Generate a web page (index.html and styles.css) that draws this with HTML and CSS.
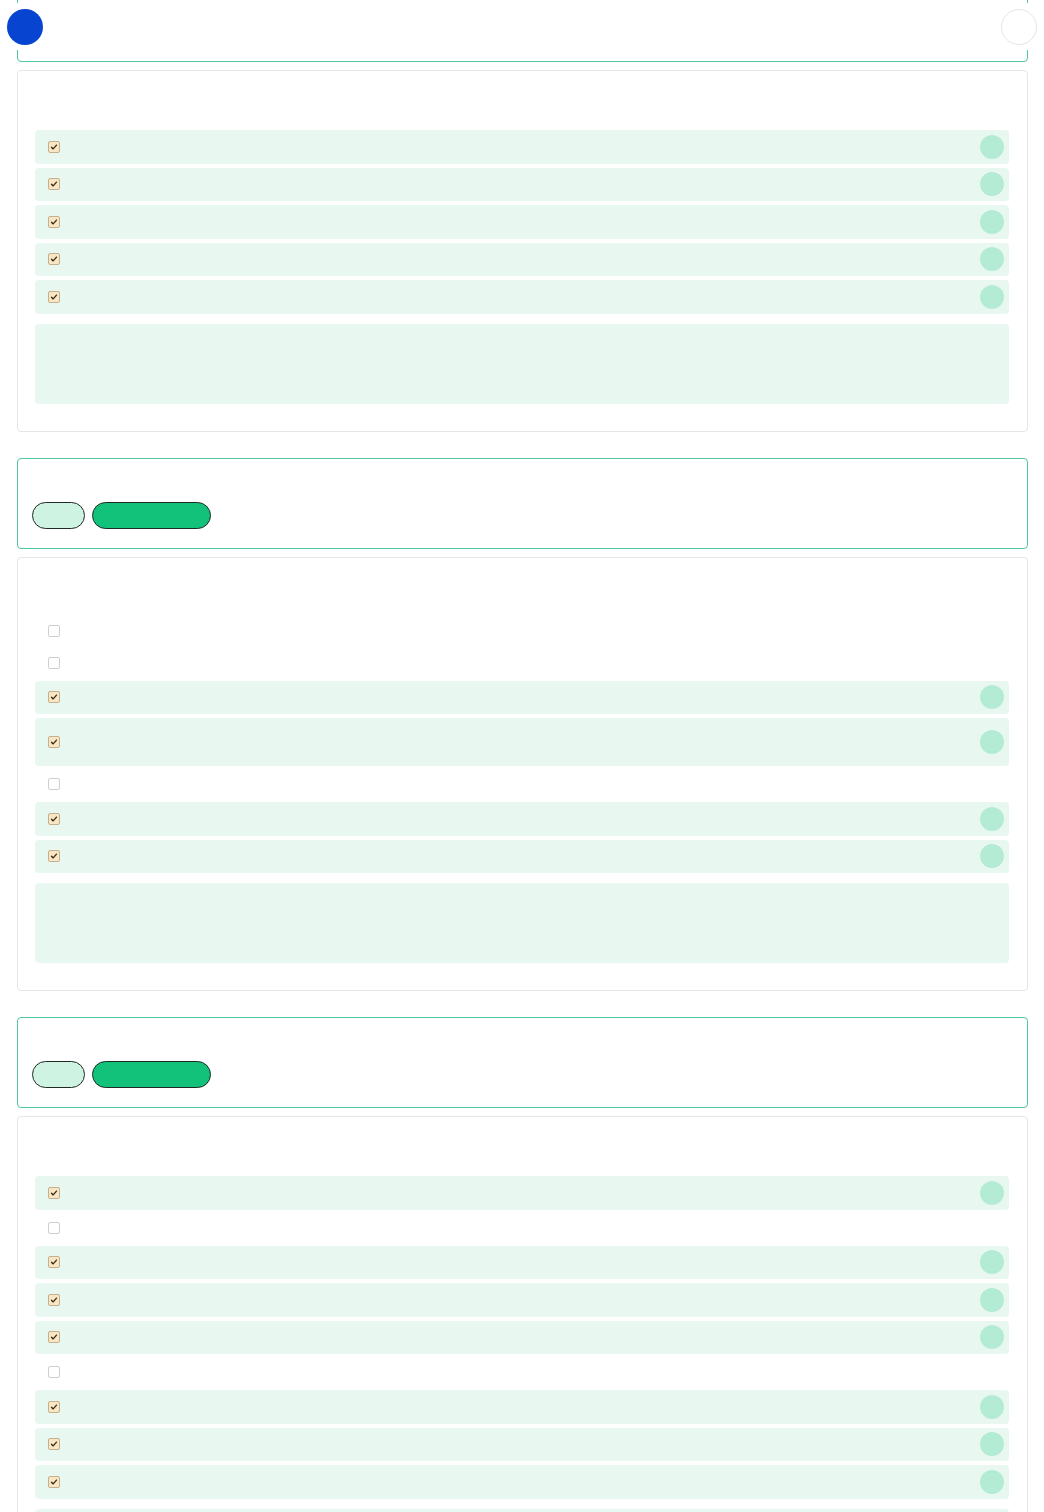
FILE: index.html
```html
<!DOCTYPE html>
<html lang="en">
<head>
  <meta charset="UTF-8">
  <title>Checklist</title>
  <link rel="stylesheet" href="styles.css">
</head>
<body>
  <div class="topbar">
    <span class="avatar"></span>
    <span class="menu-btn"></span>
  </div>

  <div class="page">
    <!-- section 1 -->
    <div class="section">
      <div class="card head">
        <div class="head-title"></div>
        <div class="actions"><span class="pill light"></span><span class="pill solid"></span></div>
      </div>
      <div class="card list">
        <div class="list-title"></div>
        <div class="items">
          <div class="item done"><span class="box on"><svg viewBox="0 0 12 12"><path d="M3 6.2l2 2.1 4-4.6"/></svg></span><span class="dot"></span></div>
          <div class="item done"><span class="box on"><svg viewBox="0 0 12 12"><path d="M3 6.2l2 2.1 4-4.6"/></svg></span><span class="dot"></span></div>
          <div class="item done"><span class="box on"><svg viewBox="0 0 12 12"><path d="M3 6.2l2 2.1 4-4.6"/></svg></span><span class="dot"></span></div>
          <div class="item done"><span class="box on"><svg viewBox="0 0 12 12"><path d="M3 6.2l2 2.1 4-4.6"/></svg></span><span class="dot"></span></div>
          <div class="item done"><span class="box on"><svg viewBox="0 0 12 12"><path d="M3 6.2l2 2.1 4-4.6"/></svg></span><span class="dot"></span></div>
        </div>
        <div class="note"></div>
      </div>
    </div>

    <!-- section 2 -->
    <div class="section">
      <div class="card head">
        <div class="head-title"></div>
        <div class="actions"><span class="pill light"></span><span class="pill solid"></span></div>
      </div>
      <div class="card list">
        <div class="list-title"></div>
        <div class="items">
          <div class="item"><span class="box"></span></div>
          <div class="item"><span class="box"></span></div>
          <div class="item done"><span class="box on"><svg viewBox="0 0 12 12"><path d="M3 6.2l2 2.1 4-4.6"/></svg></span><span class="dot"></span></div>
          <div class="item done tall"><span class="box on"><svg viewBox="0 0 12 12"><path d="M3 6.2l2 2.1 4-4.6"/></svg></span><span class="dot"></span></div>
          <div class="item"><span class="box"></span></div>
          <div class="item done"><span class="box on"><svg viewBox="0 0 12 12"><path d="M3 6.2l2 2.1 4-4.6"/></svg></span><span class="dot"></span></div>
          <div class="item done"><span class="box on"><svg viewBox="0 0 12 12"><path d="M3 6.2l2 2.1 4-4.6"/></svg></span><span class="dot"></span></div>
        </div>
        <div class="note"></div>
      </div>
    </div>

    <!-- section 3 -->
    <div class="section">
      <div class="card head">
        <div class="head-title"></div>
        <div class="actions"><span class="pill light"></span><span class="pill solid"></span></div>
      </div>
      <div class="card list">
        <div class="list-title"></div>
        <div class="items">
          <div class="item done"><span class="box on"><svg viewBox="0 0 12 12"><path d="M3 6.2l2 2.1 4-4.6"/></svg></span><span class="dot"></span></div>
          <div class="item"><span class="box"></span></div>
          <div class="item done"><span class="box on"><svg viewBox="0 0 12 12"><path d="M3 6.2l2 2.1 4-4.6"/></svg></span><span class="dot"></span></div>
          <div class="item done"><span class="box on"><svg viewBox="0 0 12 12"><path d="M3 6.2l2 2.1 4-4.6"/></svg></span><span class="dot"></span></div>
          <div class="item done"><span class="box on"><svg viewBox="0 0 12 12"><path d="M3 6.2l2 2.1 4-4.6"/></svg></span><span class="dot"></span></div>
          <div class="item"><span class="box"></span></div>
          <div class="item done"><span class="box on"><svg viewBox="0 0 12 12"><path d="M3 6.2l2 2.1 4-4.6"/></svg></span><span class="dot"></span></div>
          <div class="item done"><span class="box on"><svg viewBox="0 0 12 12"><path d="M3 6.2l2 2.1 4-4.6"/></svg></span><span class="dot"></span></div>
          <div class="item done"><span class="box on"><svg viewBox="0 0 12 12"><path d="M3 6.2l2 2.1 4-4.6"/></svg></span><span class="dot"></span></div>
        </div>
        <div class="note"></div>
      </div>
    </div>
  </div>
</body>
</html>
```

FILE: styles.css
```css
body {
  font-family: 'Inter', 'Liberation Sans', sans-serif;
  margin: 0;
  padding: 0;
  background-color: #ffffff;
}
.topbar {
  position: absolute;
  top: 3px;
  left: 0;
  right: 0;
  height: 47px;
  background: #ffffff;
  z-index: 10;
}
.avatar {
  position: absolute;
  left: 7px;
  top: 6px;
  width: 36px;
  height: 36px;
  border-radius: 50%;
  background-color: #0745d1;
}
.menu-btn {
  position: absolute;
  left: 1001px;
  top: 6px;
  width: 36px;
  height: 36px;
  box-sizing: border-box;
  border-radius: 50%;
  border: 1px solid #e4e4e4;
  background: #fff;
}
.page {
  margin: -29px 16px 0 17px;
}
.section {
  margin-bottom: 26px;
}
.card {
  box-sizing: border-box;
  border-radius: 4px;
  background: #fff;
}
.head {
  height: 91px;
  border: 1px solid #4fc8a0;
  padding: 14px;
}
.head-title {
  height: 29px;
}
.actions {
  display: flex;
  gap: 7px;
}
.pill {
  display: block;
  height: 27px;
  box-sizing: border-box;
  border: 1px solid #1f2a24;
  border-radius: 14px;
}
.pill.light {
  width: 53px;
  background-color: #cff3e3;
}
.pill.solid {
  width: 119px;
  background-color: #13c27a;
}
.list {
  margin-top: 8px;
  border: 1px solid #e6e6e6;
  padding: 17px 18px 27px 17px;
}
.list-title {
  height: 42px;
}
.items {
  display: flex;
  flex-direction: column;
  gap: 4px;
}
.item {
  display: flex;
  align-items: center;
  justify-content: space-between;
  height: 28px;
  padding: 0 5px 0 13px;
  border-radius: 4px;
}
.item.done {
  height: 33.5px;
  background-color: #e8f8f0;
}
.item.tall {
  height: 48px;
}
.box {
  display: block;
  width: 12px;
  height: 12px;
  box-sizing: border-box;
  border: 1px solid #cfcfcf;
  border-radius: 2px;
  background: #fff;
}
.box.on {
  background-color: #f8e6c4;
  border-color: #c6b08b;
}
.box svg {
  display: block;
  width: 10px;
  height: 10px;
  fill: none;
  stroke: #3a2a12;
  stroke-width: 1.6;
  stroke-linecap: round;
  stroke-linejoin: round;
}
.dot {
  display: block;
  width: 24px;
  height: 24px;
  border-radius: 50%;
  background-color: #b4ebd5;
}
.note {
  margin-top: 10px;
  height: 80px;
  border-radius: 4px;
  background-color: #e8f8f0;
}
```
